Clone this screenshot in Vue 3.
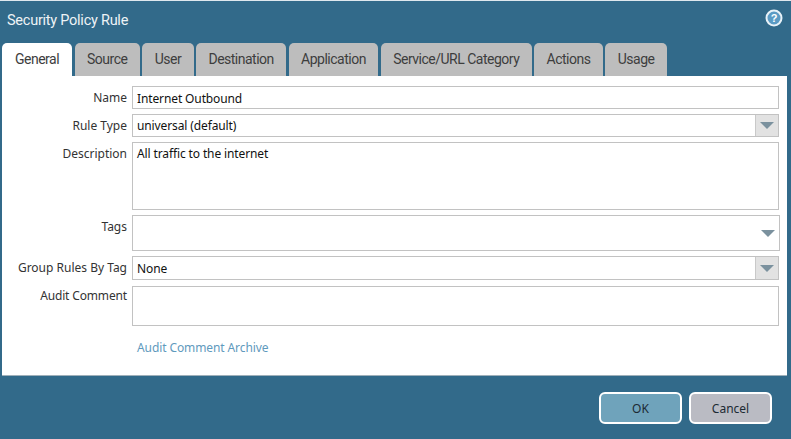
<script setup>
const tabs = ['General', 'Source', 'User', 'Destination', 'Application', 'Service/URL Category', 'Actions', 'Usage']
</script>

<template>
  <div class="dialog">
    <header class="head">
      <span class="title">Security Policy Rule</span>
      <svg class="help" width="18" height="18" viewBox="0 0 18 18">
        <circle cx="9" cy="9" r="7.5" fill="#5b9bc4" stroke="#e8f2f8" stroke-width="2" />
        <text x="9" y="12.5" text-anchor="middle" class="q">?</text>
      </svg>
    </header>
    <nav class="tabs">
      <div v-for="(t, i) in tabs" :key="t" class="tab" :class="{ active: i === 0 }">{{ t }}</div>
    </nav>
    <main class="panel">
      <label class="lab">Name</label>
      <div class="field h23 nudge">Internet Outbound</div>

      <label class="lab">Rule Type</label>
      <div class="field h23 sel">universal (default)<span class="btn"><i class="arrow"></i></span></div>

      <label class="lab top">Description</label>
      <div class="field h68 topt">All traffic to the internet</div>

      <label class="lab top">Tags</label>
      <div class="field h36 wide"><i class="arrow plain"></i></div>

      <label class="lab">Group Rules By Tag</label>
      <div class="field h24 sel">None<span class="btn"><i class="arrow"></i></span></div>

      <label class="lab top audit">Audit Comment</label>
      <div class="field h40"></div>

      <span></span>
      <a class="link">Audit Comment Archive</a>
    </main>
    <footer class="foot">
      <button class="b ok">OK</button>
      <button class="b cancel">Cancel</button>
    </footer>
  </div>
</template>

<style scoped>
.dialog {
  width: 791px;
  height: 439px;
  box-sizing: border-box;
  background: #326a8a;
  border-top: 1px solid #dfe8ee;
  display: flex;
  flex-direction: column;
  font-family: "Noto Sans", sans-serif;
  overflow: hidden;
}
.head {
  height: 42px;
  flex: none;
  display: flex;
  align-items: flex-start;
  justify-content: space-between;
  padding: 8px 8px 0 7px;
  box-sizing: border-box;
}
.title {
  font: 14.5px/22px Roboto, sans-serif;
  letter-spacing: -0.25px;
  color: #eef3f6;
  margin-top: 1px;
}
.q { font: bold 11px "Liberation Sans", sans-serif; fill: #fff; }
.tabs {
  display: flex;
  gap: 2.5px;
  height: 33px;
  flex: none;
  padding-left: 2px;
}
.tab {
  background: #bdbdbd;
  border-radius: 5px 5px 0 0;
  font: 14px/33px Roboto, sans-serif;
  letter-spacing: -0.5px;
  color: #3d3d3d;
  padding: 0 12.4px;
}
.tab.active { background: #fff; padding: 0 13px; }
.panel {
  flex: none;
  margin: 0 3px 0 2px;
  width: 785px;
  height: 300px;
  box-sizing: border-box;
  background: #fff;
  border-bottom: 1px solid #9fb0ba;
  padding: 10px 8px 0 0;
  display: grid;
  grid-template-columns: 125px 1fr;
  column-gap: 5px;
  row-gap: 5px;
  align-content: start;
}
.lab {
  font-size: 12px;
  line-height: 23px;
  color: #333;
  text-align: right;
  white-space: nowrap;
}
.lab.top { line-height: 16px; padding-top: 4px; }
.lab.audit { margin-top: 1px; padding-top: 2px; letter-spacing: -0.15px; }
.field {
  border: 1px solid #c2c2c2;
  box-sizing: border-box;
  padding-left: 4px;
  font-size: 12px;
  letter-spacing: -0.12px;
  color: #111;
  display: flex;
  align-items: center;
  position: relative;
}
.nudge { padding-top: 2px; }
.h23 { height: 23px; }
.h24 { height: 24px; }
.h36 { height: 36px; justify-content: flex-end; padding-right: 4px; }
.wide { margin-right: -1px; }
.h40 { height: 40px; margin-top: 1px; }
.h68 { height: 68px; }
.topt { align-items: flex-start; padding-top: 2px; }
.sel { justify-content: space-between; padding-right: 0; }
.btn {
  width: 22px;
  align-self: stretch;
  background: #e2e2e2;
  border-left: 1px solid #c9c9c9;
  display: flex;
  align-items: center;
  justify-content: center;
}
.arrow {
  width: 0;
  height: 0;
  border-left: 7px solid transparent;
  border-right: 7px solid transparent;
  border-top: 7px solid #7b919e;
}
.plain { margin-right: 0; }
.link {
  font-size: 12px;
  letter-spacing: -0.1px;
  color: #5f9abd;
  padding: 5px 0 0 5px;
  line-height: 24px;
}
.foot {
  flex: 1;
  display: flex;
  justify-content: flex-end;
  gap: 7px;
  padding: 16px 19px 0 0;
}
.b {
  width: 83px;
  height: 32px;
  box-sizing: border-box;
  border: 2px solid #fff;
  border-radius: 6px;
  font: 12px "Noto Sans", sans-serif;
  color: #1c2a33;
  padding: 0;
}
.ok { background: #6fa3bb; }
.cancel { background: #babbc3; }
</style>
